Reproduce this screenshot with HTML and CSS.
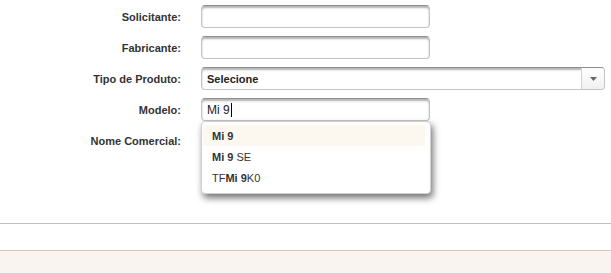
FILE: index.html
```html
<!DOCTYPE html>
<html lang="pt">
<head>
<meta charset="utf-8">
<title>Formulário</title>
<link rel="stylesheet" href="styles.css">
</head>
<body>
<form class="form">
  <label class="label" for="sol">Solicitante:</label>
  <input class="field" id="sol" type="text">

  <label class="label" for="fab">Fabricante:</label>
  <input class="field" id="fab" type="text">

  <label class="label" for="tipo">Tipo de Produto:</label>
  <div class="select" id="tipo">
    <span class="select-text">Selecione</span>
    <span class="select-btn"><svg width="7" height="4" viewBox="0 0 7 4"><path d="M0 0h7L3.5 4z" fill="#666"/></svg></span>
  </div>

  <label class="label" for="mod">Modelo:</label>
  <div class="field-wrap">
    <div class="field field-text" id="mod"><span>Mi 9</span><span class="caret"></span></div>
    <ul class="menu">
      <li class="item active"><span><b>Mi 9</b></span></li>
      <li class="item"><span><b>Mi 9</b> SE</span></li>
      <li class="item"><span>TF<b>Mi 9</b>K0</span></li>
    </ul>
  </div>

  <label class="label" for="nome">Nome Comercial:</label>
  <input class="field" id="nome" type="text">
</form>
<div class="sep"></div>
<div class="band"></div>
</body>
</html>
```

FILE: styles.css
```css
html, body {
  margin: 0;
  padding: 0;
  background: #fff;
  font-family: "Liberation Sans", Arial, sans-serif;
}
.form {
  display: grid;
  grid-template-columns: 181px 1fr;
  column-gap: 20px;
  row-gap: 8px;
  padding-top: 5px;
  align-items: center;
}
.label {
  text-align: right;
  font-size: 11px;
  font-weight: bold;
  color: #333;
}
.field {
  box-sizing: border-box;
  width: 229px;
  height: 23px;
  margin: 0;
  border: 1px solid #c4c4c4;
  border-top-color: #8f8f8f;
  border-radius: 4px;
  background: #fff;
  box-shadow: inset 0 2px 2px rgba(0,0,0,0.3);
  font-family: "Liberation Sans", Arial, sans-serif;
  font-size: 12px;
  padding: 0 5px;
  color: #222;
}
.field-wrap {
  position: relative;
}
.field-text {
  display: flex;
  align-items: center;
  padding-top: 1px;
}
.caret {
  display: inline-block;
  width: 1px;
  height: 14px;
  background: #000;
  margin-left: 1px;
}
.select {
  box-sizing: border-box;
  width: 404px;
  height: 23px;
  display: flex;
  align-items: stretch;
  border: 1px solid #c4c4c4;
  border-top-color: #8f8f8f;
  border-radius: 4px;
  box-shadow: inset 0 2px 2px rgba(0,0,0,0.3);
  background: #fff;
}
.select-text {
  flex: 1;
  display: flex;
  align-items: center;
  padding-left: 5px;
  font-size: 11px;
  font-weight: bold;
  color: #222;
}
.select-btn {
  width: 22px;
  display: flex;
  align-items: center;
  justify-content: center;
  border-left: 1px solid #d4d4d4;
  background: linear-gradient(#fff, #f0f0f0);
  border-radius: 0 3px 3px 0;
}
.menu {
  position: absolute;
  left: 0;
  top: 23px;
  box-sizing: border-box;
  width: 230px;
  height: 73px;
  margin: 0;
  padding: 3px 5px 0 1px;
  list-style: none;
  background: #fff;
  border: 1px solid #d0d0d0;
  border-radius: 4px;
  box-shadow: 2px 4px 7px rgba(0,0,0,0.55);
  z-index: 2;
}
.item {
  height: 21px;
  display: flex;
  align-items: center;
  padding-left: 9px;
  font-size: 11px;
  color: #333;
}
.item b {
  font-weight: bold;
}
.item.active {
  background: #fcf8ef;
}
.sep {
  margin-top: 71px;
  height: 26px;
  border-top: 1px solid #bdbdbd;
}
.band {
  height: 22px;
  border-top: 1px solid #cfc9c5;
  border-bottom: 1px solid #d0d0d0;
  background: linear-gradient(#fbf3ee, #f6f5f3);
}
```
